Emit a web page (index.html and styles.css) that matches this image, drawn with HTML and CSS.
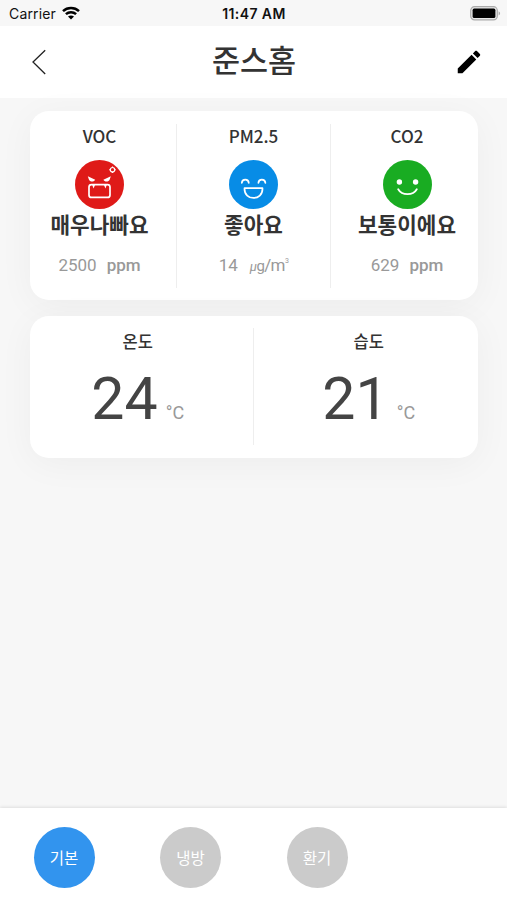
FILE: index.html
```html
<!DOCTYPE html>
<html lang="ko">
<head>
  <meta charset="UTF-8">
  <title>준스홈</title>
  <link rel="stylesheet" href="styles.css">
</head>
<body>

  <div class="status-bar">
    <div class="carrier">
      <span>Carrier</span>
      <svg width="18" height="14" viewBox="0 0 18 14" fill="none" stroke="#000" stroke-width="2.5">
        <path d="M1 5.1C5.5.9 12.5.9 17 5.1"/>
        <path d="M3.9 8.2c2.9-2.7 7.3-2.7 10.2 0"/>
        <path d="M9 13.6l-3-3c1.7-1.5 4.3-1.5 6 0z" fill="#000" stroke="none"/>
      </svg>
    </div>
    <div class="clock">11:47 AM</div>
    <div class="battery">
      <svg width="31" height="15" viewBox="0 0 31 15">
        <rect x=".7" y=".7" width="26.6" height="13.2" rx="3.8" fill="#e8e8e8" stroke="#aaa" stroke-width="1.2"/>
        <rect x="2.6" y="2.6" width="22.8" height="9.4" rx="1.6" fill="#000"/>
        <path d="M28.6 5.2c2 .8 2 3.4 0 4.2z" fill="#aaa"/>
      </svg>
    </div>
  </div>

  <header class="header">
    <svg class="back" width="14" height="26" viewBox="0 0 14 26" fill="none" stroke="#222" stroke-width="1.3">
      <path d="M13.2 1.2L1 13l12.2 12"/>
    </svg>
    <h1>준스홈</h1>
    <svg class="edit" width="30" height="30" viewBox="0 0 24 24">
      <path d="M3 17.25V21h3.75L17.81 9.94l-3.75-3.75L3 17.25zM20.71 7.04c.39-.39.39-1.02 0-1.41l-2.34-2.34c-.39-.39-1.02-.39-1.41 0l-1.83 1.83 3.75 3.75 1.83-1.83z"/>
    </svg>
  </header>

  <main class="content">
    <section class="card air">
      <div class="cell">
        <h2>VOC</h2>
        <svg width="49" height="49" viewBox="0 0 49 49" fill="none" stroke="#fff">
          <circle cx="24.5" cy="24.5" r="24.5" fill="#df1a18" stroke="none"/>
          <path d="M12.8 16.3l7.4 3.4c-1.2 2.6-5.6 2.3-6.4-.5zM35.8 16.3l-7.4 3.4c1.2 2.6 5.6 2.3 6.4-.5z" fill="#fff" stroke="none"/>
          <rect x="14" y="24.6" width="21" height="12.8" rx="2.5" stroke-width="1.7"/>
          <path d="M17.2 25l1.4 3.6 1.4-3.6zM29 25l1.4 3.6 1.4-3.6z" fill="#fff" stroke="none"/>
          <circle cx="37.5" cy="9.7" r="2.2" stroke-width="1.2"/>
          <path d="M37.5 6.4v1M37.5 12v1M34.2 9.7h1M39.8 9.7h1" stroke-width="1.1"/>
        </svg>
        <strong>매우나빠요</strong>
        <p><span>2500</span><span class="unit">ppm</span></p>
      </div>
      <div class="cell">
        <h2>PM2.5</h2>
        <svg width="49" height="49" viewBox="0 0 49 49" fill="none" stroke="#fff" stroke-width="1.7" stroke-linecap="round">
          <circle cx="24.5" cy="24.5" r="24.5" fill="#078ce6" stroke="none"/>
          <path d="M12.8 23c.3-4.4 6.6-4.4 7 0M29.4 23c.3-4.4 6.6-4.4 7 0"/>
          <path d="M15.5 28.2h18c.4 13-18.4 13-18 0z" stroke-linejoin="round"/>
        </svg>
        <strong>좋아요</strong>
        <p><span>14</span><span class="dust"><i>μ</i><b>g</b>/m<sup>3</sup></span></p>
      </div>
      <div class="cell">
        <h2>CO2</h2>
        <svg width="49" height="49" viewBox="0 0 49 49" fill="none" stroke="#fff">
          <circle cx="24.5" cy="24.5" r="24.5" fill="#19ac22" stroke="none"/>
          <circle cx="16.4" cy="22" r="2.7" fill="#fff" stroke="none"/>
          <circle cx="32.6" cy="22" r="2.7" fill="#fff" stroke="none"/>
          <path d="M15.2 29.2c3.8 6.6 14.8 6.6 18.6 0" stroke-width="1.8" stroke-linecap="round"/>
        </svg>
        <strong>보통이에요</strong>
        <p><span>629</span><span class="unit">ppm</span></p>
      </div>
    </section>

    <section class="card climate">
      <div class="cell">
        <h2>온도</h2>
        <p><span class="value">24</span><span class="degree">°C</span></p>
      </div>
      <div class="cell">
        <h2>습도</h2>
        <p><span class="value">21</span><span class="degree">°C</span></p>
      </div>
    </section>
  </main>

  <nav class="modes">
    <button class="mode active">기본</button>
    <button class="mode">냉방</button>
    <button class="mode">환기</button>
  </nav>

</body>
</html>
```

FILE: styles.css
```css
* { box-sizing: border-box; }
body { display: flex; flex-direction: column; height: 900px; margin: 0; background: #f7f7f7; color: #333; font-family: "Noto Sans CJK KR", sans-serif; overflow: hidden; }
h1, h2, p { margin: 0; font-weight: 400; }
svg { display: block; flex: none; }

.status-bar { display: grid; grid-template-columns: 1fr auto 1fr; align-items: center; height: 26px; padding: 0 6px 0 7px; color: #111; font-family: Inter, sans-serif; font-size: 14px; }
.carrier { display: flex; align-items: center; gap: 6px; padding: 0 0 0 2px; letter-spacing: 0.15px; }
.clock { padding: 1px 0 0 0; font-weight: 600; font-size: 14px; letter-spacing: 0.4px; }
.battery { display: flex; justify-content: flex-end; }

.header { display: flex; align-items: center; justify-content: space-between; height: 72px; padding: 0 23px 0 32px; background: #fff; }
.header h1 { padding: 0 0 5px 8px; font-size: 30.5px; font-weight: 500; line-height: 67px; }

.content { flex: 1; padding: 13px 29px 0 30px; }
.card { display: grid; background: #fff; border-radius: 19px; box-shadow: 0 6px 36px rgba(0, 0, 0, 0.045); }
.cell { display: flex; flex-direction: column; align-items: center; }
.cell + .cell { border-left: 1px solid #eee; }
.cell h2 { font-size: 17px; line-height: 24px; font-weight: 500; }

.air { grid-template-columns: repeat(3, 153.5px); justify-content: center; height: 189px; padding: 13px 2px 12px 0; }
.air svg { margin-top: 12px; }
.air strong { font-size: 21.3px; line-height: 30px; font-weight: 700; white-space: nowrap; }
.air p { display: flex; gap: 10px; margin-top: 14px; color: #999; font-family: Roboto, sans-serif; font-size: 17px; line-height: 24px; }
.air .unit { font-weight: 500; }
.air .dust { padding-left: 2px; letter-spacing: -0.6px; }
.dust i { font-size: 13px; }
.dust b { font-size: 15px; font-weight: 400; }
.dust sup { font-size: 7px; line-height: 0; vertical-align: 8px; }

.climate { grid-template-columns: repeat(2, 230.5px); justify-content: center; height: 142px; margin-top: 16px; padding: 12px 2px 13px 0; }
.climate .cell { height: 117px; }
.climate h2 { font-size: 16.5px; line-height: 26px; }
.climate p { display: flex; align-items: baseline; gap: 8px; line-height: 89px; }
.climate .value { color: #444; font-family: Roboto, sans-serif; font-size: 59px; }
.climate .degree { color: #999; font-family: Roboto, sans-serif; font-size: 18px; }

.modes { display: flex; gap: 65.5px; height: 92px; padding: 19px 33.5px; background: #fff; box-shadow: 0 -1px 3px rgba(0, 0, 0, 0.1); }
.mode { width: 61px; height: 61px; padding: 0 0 1px; border: none; border-radius: 50%; background: #cbcbcb; color: #fff; font-family: inherit; font-size: 15.5px; }
.mode.active { background: #3294ee; }
```
